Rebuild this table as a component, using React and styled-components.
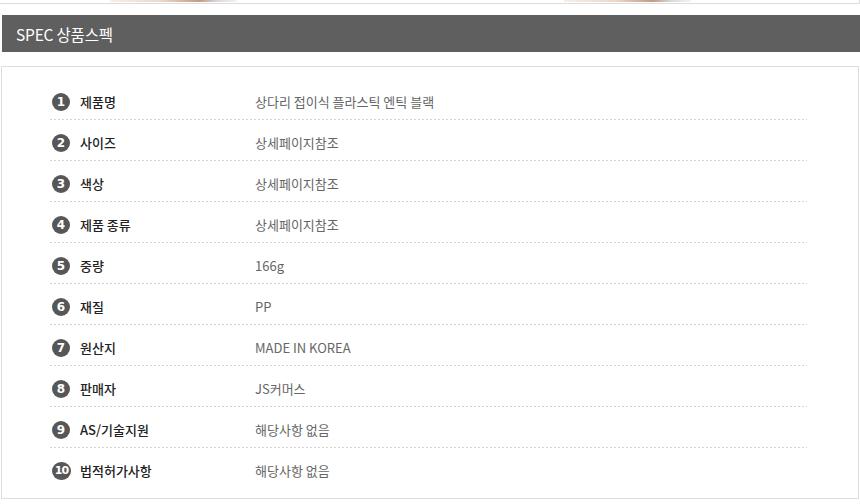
import React from 'react';
import styled, { createGlobalStyle } from 'styled-components';

const GlobalStyle = createGlobalStyle`
  body {
    margin: 0;
    background: #fff;
    font-family: "Noto Sans CJK KR", "Noto Sans", sans-serif;
  }
`;

const Page = styled.div`
  width: 860px;
  overflow: hidden;
`;

const PrevBox = styled.div`
  height: 4px;
  width: 860px;
  box-sizing: border-box;
  border-bottom: 1px solid #dcdcdc;
  border-right: 1px solid #dcdcdc;
  display: flex;
  gap: 327px;
  padding-left: 110px;
`;

const Thumb = styled.div`
  width: 127px;
  height: 2px;
  background: linear-gradient(to right, #f6eee8, #ecd9cc 40%, #c49a85 70%, #dadada 85%, #f4f4f4);
`;

const Title = styled.div`
  margin: 11px 0 0 2px;
  height: 37px;
  background: #5f5f5f;
  color: #fff;
  font-size: 15.5px;
  display: flex;
  align-items: center;
  padding-left: 14px;
  letter-spacing: -0.2px;
`;

const SpecBox = styled.div`
  margin: 14px 0 0 1px;
  width: 858px;
  box-sizing: border-box;
  border: 1px solid #dedede;
  padding: 12px 51px 10px 48px;
`;

const Row = styled.div`
  display: flex;
  align-items: center;
  box-sizing: border-box;
  padding-top: 6px;
  font-size: 13px;
  line-height: 16px;
  background-image: ${p =>
    p.$last ? 'none' : 'repeating-linear-gradient(to right, #d2d2d2 0 2px, transparent 2px 4px)'};
  background-size: 100% 1px;
  background-repeat: no-repeat;
  background-position: bottom left;
  height: ${p => (p.$last ? '40px' : '41px')};
  padding-bottom: ${p => (p.$last ? '0' : '1px')};
`;

const Num = styled.span`
  flex: none;
  margin-left: 2px;
  width: ${p => (p.$wide ? '19px' : '18px')};
  height: 18px;
  border-radius: 9px;
  background: #575757;
  color: #fff;
  font-family: "DejaVu Sans", sans-serif;
  font-size: ${p => (p.$wide ? '11px' : '12px')};
  font-weight: 700;
  letter-spacing: ${p => (p.$wide ? '-1px' : '0')};
  display: flex;
  align-items: center;
  justify-content: center;
  margin-right: ${p => (p.$wide ? '9px' : '10px')};
`;

const Label = styled.span`
  width: 175px;
  color: #222;
  font-weight: 500;
`;

const Value = styled.span`
  color: #666;
`;

const specs = [
  ['제품명', '상다리 접이식 플라스틱 엔틱 블랙'],
  ['사이즈', '상세페이지참조'],
  ['색상', '상세페이지참조'],
  ['제품 종류', '상세페이지참조'],
  ['중량', '166g'],
  ['재질', 'PP'],
  ['원산지', 'MADE IN KOREA'],
  ['판매자', 'JS커머스'],
  ['AS/기술지원', '해당사항 없음'],
  ['법적허가사항', '해당사항 없음'],
];

export default function App() {
  return (
    <Page>
      <GlobalStyle />
      <PrevBox>
        <Thumb />
        <Thumb />
      </PrevBox>
      <Title>SPEC 상품스펙</Title>
      <SpecBox>
        {specs.map(([label, value], i) => (
          <Row key={label} $last={i === specs.length - 1}>
            <Num $wide={i >= 9}>{i + 1}</Num>
            <Label>{label}</Label>
            <Value>{value}</Value>
          </Row>
        ))}
      </SpecBox>
    </Page>
  );
}
